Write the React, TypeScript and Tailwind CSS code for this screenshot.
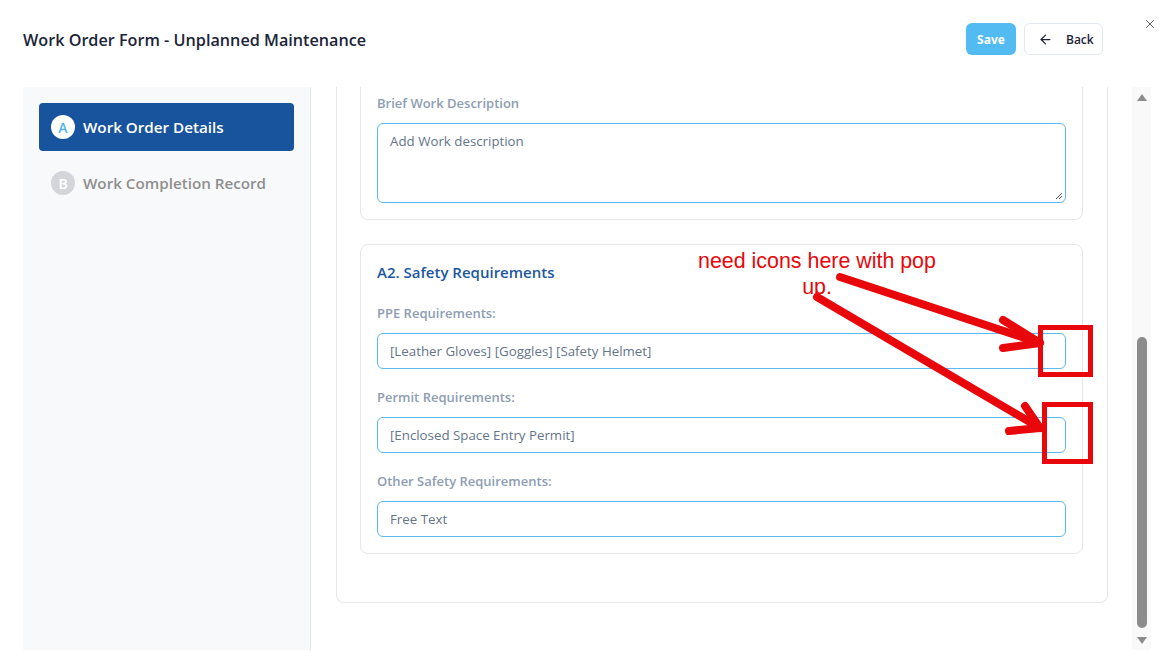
import { ArrowLeft, X } from "lucide-react";

const FONT = { fontFamily: '"Open Sans", "Noto Sans", sans-serif' };

function Field({ label, value }: { label: string; value: string }) {
  return (
    <div className="flex flex-col">
      <label className="text-[13px] leading-[18px] font-semibold text-[#8d9db3]">{label}</label>
      <div className="mt-[11px] h-[36px] border border-[#5bb9ef] rounded-md px-[12px] pt-[2px] flex items-center text-[13.3px] text-[#64748b]">
        {value}
      </div>
    </div>
  );
}

function StepItem({ letter, title, active }: { letter: string; title: string; active?: boolean }) {
  return (
    <div
      className={
        active
          ? "h-[48px] rounded-[4px] bg-[#18549d] flex items-center pl-[12px] gap-[8px]"
          : "h-[48px] flex items-center pl-[12px] gap-[8px]"
      }>
      <span
        className={
          active
            ? "w-[24px] h-[24px] rounded-full bg-white text-[#4fb6ee] text-[14px] font-semibold flex items-center justify-center"
            : "w-[24px] h-[24px] rounded-full bg-[#d3d5da] text-white text-[14px] font-semibold flex items-center justify-center"
        }>
        {letter}
      </span>
      <span className={active ? "text-[15.2px] font-semibold text-white" : "text-[15.2px] font-semibold text-[#8f8f8f]"}>
        {title}
      </span>
    </div>
  );
}

function Annotations() {
  return (
    <div className="absolute inset-0 pointer-events-none">
      <div
        className="absolute left-[660px] top-[248px] w-[314px] text-center text-[21.4px] leading-[26px] text-[#e8070b]"
        style={{ fontFamily: '"Liberation Sans", Arial, sans-serif' }}>
        need icons here with pop
        <br />
        up.
      </div>
      <svg className="absolute inset-0" width="1174" height="672" viewBox="0 0 1174 672">
        <g stroke="#e8070b" strokeWidth="8" strokeLinecap="round" strokeLinejoin="round" fill="none">
          <path d="M840 277 L1040 343" />
          <path d="M1003 320 L1040 343 L1003 348" />
          <path d="M817 297 L1040 428" />
          <path d="M1025 406 L1040 428 L1009 431" />
        </g>
        <g stroke="#e8070b" strokeWidth="5" fill="none">
          <rect x="1040.5" y="327.5" width="50" height="47" />
          <rect x="1044.5" y="404.5" width="46" height="57" />
        </g>
      </svg>
    </div>
  );
}

export default function App() {
  return (
    <div className="relative w-[1174px] h-[672px] bg-white overflow-hidden" style={FONT}>
      {/* header */}
      <div className="h-[87px] flex items-start pl-[23px]">
        <h1 className="mt-[28px] text-[16.2px] leading-[24px] font-semibold text-[#1c2438]">
          Work Order Form - Unplanned Maintenance
        </h1>
        <div className="ml-auto flex items-start">
          <button className="mt-[23px] h-[32px] w-[50px] rounded-md bg-[#52bcf2] text-white text-[12px] font-bold pt-[1px]">
            Save
          </button>
          <button className="mt-[23px] ml-[8px] h-[32px] w-[79px] rounded-md border border-[#e2e8f0] bg-white flex items-center pl-[13px] gap-[13px] text-[12px] font-semibold text-[#1c2438]">
            <ArrowLeft size={15} strokeWidth={2} />
            <span className="pt-[2px]">Back</span>
          </button>
          <button className="mt-[16px] ml-[40px] mr-[17px] text-[#555] h-[16px] w-[14px] flex items-center justify-center">
            <X size={14} strokeWidth={1.6} />
          </button>
        </div>
      </div>

      {/* body */}
      <div className="flex h-[563px] pl-[23px]">
        <aside className="w-[288px] shrink-0 bg-[#f8f9fb] border-r border-[#e5e7eb] pt-[16px] pl-[16px] pr-[16px] flex flex-col gap-[8px]">
          <StepItem letter="A" title="Work Order Details" active />
          <StepItem letter="B" title="Work Completion Record" />
        </aside>

        <main className="flex-1 overflow-hidden pl-[25px] pr-[24px]">
          <div className="border border-t-0 border-[#e5e7eb] rounded-b-[8px] pl-[23px] pr-[24px] pb-[48px]">
            <div className="border border-t-0 border-[#e5e7eb] rounded-b-[8px] px-[16px] pt-[7px] pb-[16px]">
              <label className="block text-[13px] leading-[18px] font-semibold text-[#8d9db3]">Brief Work Description</label>
              <div className="mt-[11px] h-[80px] border border-[#5bb9ef] rounded-md px-[12px] pt-[8px] text-[13.3px] text-[#64748b] relative">
                Add Work description
                <svg className="absolute right-[2px] bottom-[2px]" width="8" height="8" viewBox="0 0 8 8">
                  <path d="M7 1 L1 7 M7 4 L4 7" stroke="#555" strokeWidth="1" />
                </svg>
              </div>
            </div>

            <div className="mt-[24px] border border-[#e5e7eb] rounded-[8px] px-[16px] pt-[16px] pb-[16px]">
              <h2 className="text-[15px] leading-[22px] font-semibold text-[#1d57a0]">A2. Safety Requirements</h2>
              <div className="mt-[21px] flex flex-col gap-[19px]">
                <Field label="PPE Requirements:" value="[Leather Gloves] [Goggles] [Safety Helmet]" />
                <Field label="Permit Requirements:" value="[Enclosed Space Entry Permit]" />
                <Field label="Other Safety Requirements:" value="Free Text" />
              </div>
            </div>
          </div>
        </main>

        <div className="w-[19px] shrink-0 bg-[#f9f9f9] flex flex-col items-center mr-[23px]">
          <svg className="mt-[7px]" width="10" height="7" viewBox="0 0 10 7">
            <path d="M5 0 L10 7 L0 7 Z" fill="#8c8c8c" />
          </svg>
          <div className="flex-1" />
          <div className="w-[10px] h-[291px] rounded-full bg-[#8c8c8c]" />
          <svg className="mt-[9px] mb-[6px]" width="10" height="7" viewBox="0 0 10 7">
            <path d="M0 0 L10 0 L5 7 Z" fill="#8c8c8c" />
          </svg>
        </div>
      </div>

      <Annotations />
    </div>
  );
}
